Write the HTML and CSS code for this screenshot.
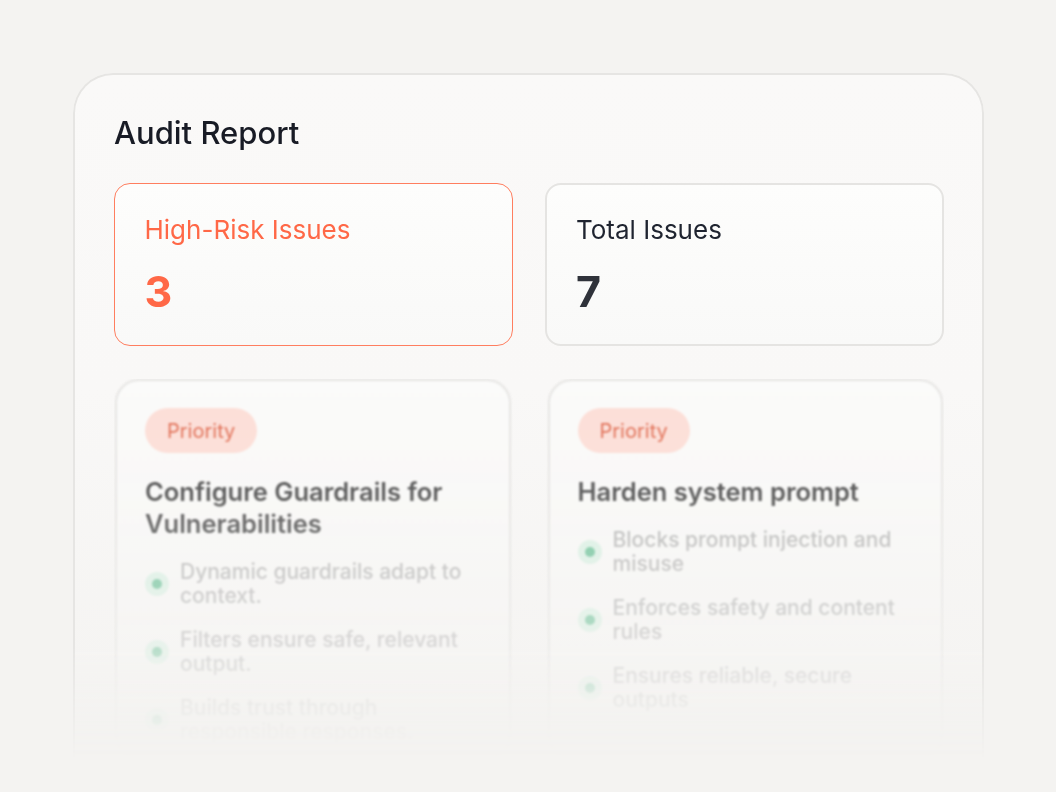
FILE: index.html
```html
<!DOCTYPE html>
<html lang="en">
<head>
<meta charset="utf-8">
<title>Audit Report</title>
<link rel="stylesheet" href="styles.css">
</head>
<body>
<section class="panel">
  <h1 class="title">Audit Report</h1>
  <div class="stats">
    <div class="stat stat-risk">
      <div class="stat-label">High-Risk Issues</div>
      <div class="stat-value">3</div>
    </div>
    <div class="stat">
      <div class="stat-label">Total Issues</div>
      <div class="stat-value">7</div>
    </div>
  </div>
  <div class="tasks">
    <article class="task">
      <span class="pill">Priority</span>
      <h2 class="task-title">Configure Guardrails for Vulnerabilities</h2>
      <ul class="points">
        <li class="point"><span class="dot"></span><span>Dynamic guardrails adapt to context.</span></li>
        <li class="point"><span class="dot"></span><span>Filters ensure safe, relevant output.</span></li>
        <li class="point"><span class="dot"></span><span>Builds trust through responsible responses.</span></li>
      </ul>
    </article>
    <article class="task">
      <span class="pill">Priority</span>
      <h2 class="task-title">Harden system prompt</h2>
      <ul class="points">
        <li class="point"><span class="dot"></span><span>Blocks prompt injection and misuse</span></li>
        <li class="point"><span class="dot"></span><span>Enforces safety and content rules</span></li>
        <li class="point"><span class="dot"></span><span>Ensures reliable, secure outputs</span></li>
      </ul>
    </article>
  </div>
</section>
</body>
</html>
```
FILE: styles.css
```css
* { box-sizing: border-box; }
html, body { margin: 0; padding: 0; }
body {
  background: #f4f3f1;
  font-family: Inter, "Noto Sans", "Liberation Sans", sans-serif;
  height: 792px;
  overflow: hidden;
}
.panel {
  margin: 73px 0 0 73px;
  width: 911px;
  height: 700px;
  border: 2px solid #e6e5e3;
  border-bottom: none;
  border-radius: 40px 40px 0 0;
  background: linear-gradient(to bottom, #faf9f8 0%, #f9f8f7 45%, #f4f3f1 95%);
  padding: 40px 38px 0 39px;
  -webkit-mask-image: linear-gradient(to bottom, #000 0%, #000 82%, transparent 98%);
  mask-image: linear-gradient(to bottom, #000 0%, #000 82%, transparent 98%);
}
.title {
  margin: 0;
  font-size: 31px;
  line-height: 36px;
  font-weight: 500;
  color: #181b25;
}
.stats {
  margin-top: 32px;
  display: grid;
  grid-template-columns: 1fr 1fr;
  gap: 32px;
}
.stat {
  height: 163px;
  border: 2px solid #e5e4e2;
  border-radius: 16px;
  background: linear-gradient(to bottom, #fdfdfc, #f9f9f8);
  padding: 29px 29px;
}
.stat-risk {
  border: 1.5px solid #ff7e5f;
  padding: 29.5px 29.5px;
}
.stat-label {
  font-size: 26px;
  line-height: 31px;
  color: #1f2430;
  font-weight: 400;
}
.stat-value {
  margin-top: 20px;
  font-size: 43px;
  line-height: 52px;
  font-weight: 700;
  color: #2f323a;
}
.stat-risk .stat-label,
.stat-risk .stat-value { color: #ff6847; }

.tasks {
  margin-top: 33px;
  display: grid;
  grid-template-columns: 1fr 1fr;
  column-gap: 37px;
  padding: 0 1px;
  filter: blur(0.9px);
  -webkit-mask-image: linear-gradient(to bottom, rgba(0,0,0,0.85) 0%, rgba(0,0,0,0.74) 30%, rgba(0,0,0,0.48) 60%, rgba(0,0,0,0.22) 90%, rgba(0,0,0,0.05) 100%);
  mask-image: linear-gradient(to bottom, rgba(0,0,0,0.85) 0%, rgba(0,0,0,0.74) 30%, rgba(0,0,0,0.48) 60%, rgba(0,0,0,0.22) 90%, rgba(0,0,0,0.05) 100%);
}
.task {
  height: 380px;
  border: 2px solid #e2e1df;
  border-radius: 24px;
  background: linear-gradient(to bottom, #fbfbfa, #f6f5f3);
  padding: 27px 28px 0 28px;
  display: flex;
  flex-direction: column;
  align-items: flex-start;
  overflow: hidden;
}
.task > * { flex-shrink: 0; }
.pill {
  display: inline-flex;
  align-items: center;
  height: 45px;
  padding: 1px 22px 0;
  border-radius: 23px;
  background: #fcd9d1;
  color: #dc5436;
  font-size: 20px;
  font-weight: 400;
}
.task-title {
  margin: 22.5px 0 0 0;
  font-size: 25.5px;
  line-height: 32px;
  font-weight: 600;
  color: #2a2a2a;
  max-width: 335px;
}
.points {
  list-style: none;
  margin: 20.5px 0 0 0;
  padding: 0;
  display: flex;
  flex-direction: column;
  gap: 20px;
}
.point {
  display: flex;
  align-items: center;
  gap: 11px;
  font-size: 21px;
  line-height: 24px;
  font-weight: 500;
  color: #a9a9a9;
  max-width: 325px;
}
.dot {
  flex: none;
  width: 24px;
  height: 24px;
  border-radius: 50%;
  background: #d4efe0;
  display: flex;
  align-items: center;
  justify-content: center;
}
.dot::after {
  content: "";
  width: 10px;
  height: 10px;
  border-radius: 50%;
  background: #52b887;
}
```
